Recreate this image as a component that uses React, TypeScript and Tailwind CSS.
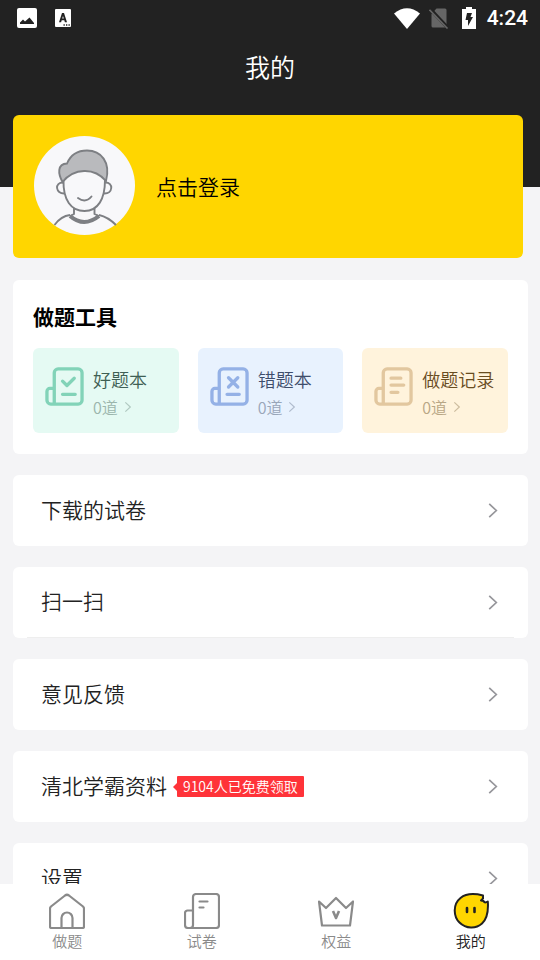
import React from "react";

function ChevronRight({ className }: { className: string }) {
  return (
    <svg viewBox="0 0 10 18" fill="none" stroke="currentColor" strokeWidth="1.8" className={className} aria-hidden="true">
      <path d="M1 2 8.500 9 1 16" />
    </svg>
  );
}

function PaperIcon({ children, className }: { children: React.ReactNode; className: string }) {
  return (
    <svg
      viewBox="0 0 40 40"
      fill="none"
      stroke="currentColor"
      strokeWidth="3.4"
      strokeLinecap="round"
      strokeLinejoin="round"
      className={className}
      aria-hidden="true"
    >
      <path d="M9.500 38V6a4 4 0 0 1 4-4H34a4 4 0 0 1 4 4v28a4 4 0 0 1-4 4H6a4 4 0 0 1-4-4V25a3 3 0 0 1 3-3h4" />
      {children}
    </svg>
  );
}

function StatusBar() {
  return (
    <div className="flex h-9 items-center justify-between pl-[17px] pr-3">
      <div className="flex items-center gap-[18px]">
        <svg viewBox="0 0 20 20" className="size-5" aria-hidden="true">
          <rect width="20" height="20" rx="2" fill="#fff" />
          <path d="M3 16v-1.500L6 11.500 8 13.500 12.500 9.500 17 15v1z" fill="#222" />
        </svg>
        <svg viewBox="0 0 16 18" className="h-[18px] w-4" aria-hidden="true">
          <rect width="16" height="18" rx="1" fill="#fff" />
          <path
            d="M4 13.200 7 4h2l3 9.200H9.900L9.300 11.300H6.700L6.100 13.200zM7.200 9.600h1.600L8 7z"
            fill="#222"
            fillRule="evenodd"
          />
          <path d="M8.500 16h1.300M11 16h1.300M13.500 16h1.300" stroke="#222" strokeWidth="1.400" />
        </svg>
      </div>
      <div className="flex items-center">
        <svg viewBox="0 0 26 21" className="h-[21px] w-[26px]" aria-hidden="true">
          <path d="M0 5.500Q13-5 26 5.500L13 21z" fill="#fff" />
        </svg>
        <svg viewBox="0 0 20 21" className="ml-[9px] h-[21px] w-5" aria-hidden="true">
          <path d="M7.500.5h8.500a1.500 1.500 0 0 1 1.500 1.500v16a1.500 1.500 0 0 1-1.500 1.500h-12A1.500 1.500 0 0 1 2.500 18V6z" fill="#666" />
          <path d="M1.200 1 19 20" stroke="#222" strokeWidth="3.500" />
          <path d="M.5 1.800 18.500 20.500" stroke="#666" strokeWidth="1.600" />
        </svg>
        <svg viewBox="0 0 14 22" className="ml-[13px] h-[22px] w-[14px]" aria-hidden="true">
          <path d="M4 0h6v2h4v20H0V2h4z" fill="#fff" />
          <path d="M5 6h5L8.500 10H11L6 19V13H3.500z" fill="#222" />
        </svg>
        <span className="ml-[11px] font-[Roboto] text-[21px] font-medium leading-6">4:24</span>
      </div>
    </div>
  );
}

function Avatar() {
  return (
    <svg viewBox="0 0 101 99" className="h-[99px] w-[101px]" fill="none" stroke="#7d7f83" strokeWidth="1.900" aria-hidden="true">
      <ellipse cx="50.500" cy="49.500" rx="50.500" ry="49.500" fill="#f8f8fa" stroke="none" />
      <path d="M28.500 46C24 38 23 28 33 27.500C37 18 45 14.500 53 14.500C67 14.500 77 26 72 45C60 31 40 32 28.500 46Z" fill="#b9babd" />
      <path d="M29.500 44C29 64 37 75 50.500 75C64 75 71 63 71 44" />
      <path d="M29.500 46.500C20 46 21.500 58 30.500 57.500M71 46.500C80 46 79 58 70 57.500" />
      <path d="M44 62Q51.500 67.500 57.500 60.500" strokeLinecap="round" />
      <path d="M40 72V78L36 80M60.500 72V78L65 80" />
      <path d="M36 80Q50 92 65 80" strokeWidth="4" />
      <path d="M20.500 89Q27 80 36 79M65 79Q74 81 82 89" />
    </svg>
  );
}

const tools = [
  {
    name: "好题本",
    count: "0道",
    card: "bg-[#e5faf3]",
    icon: "size-[39px] shrink-0 text-[#82d3b8]",
    title: "text-[#3f5f54]",
    sub: "text-[#9bb5ac]",
    mark: <path d="M18 14.500 22.500 19 30 11.500M18 28h13" />,
  },
  {
    name: "错题本",
    count: "0道",
    card: "bg-[#e8f2fe]",
    icon: "size-[39px] shrink-0 text-[#94b1e6]",
    title: "text-[#3e4d6b]",
    sub: "text-[#99a6b9]",
    mark: <path d="M19 11 28.500 20.500M28.500 11 19 20.500M17.500 28H30" />,
  },
  {
    name: "做题记录",
    count: "0道",
    card: "bg-[#fff3dc]",
    icon: "size-[39px] shrink-0 text-[#e2c79f]",
    title: "text-[#694c1f]",
    sub: "text-[#b8a685]",
    mark: <path d="M17.500 11.500h10M17.500 18.500h13M17.500 26h7" />,
  },
];

const rows = [
  { label: "下载的试卷" },
  { label: "扫一扫", divider: true },
  { label: "意见反馈" },
  { label: "清北学霸资料", badge: "9104人已免费领取" },
  { label: "设置" },
];

const tabs = [
  {
    label: "做题",
    icon: (
      <svg viewBox="0 0 36 36" fill="none" stroke="currentColor" strokeWidth="2.200" strokeLinejoin="round" className="size-9" aria-hidden="true">
        <path d="M1 33.500V15.500Q1 14.500 2 13.500L16 2.500Q18 1 20 2.500L34 13.500Q35 14.500 35 15.500V33.500Q35 35 33.500 35H2.500Q1 35 1 33.500Z" />
        <path d="M12.500 35V25a5.500 5.500 0 0 1 11 0V35" />
      </svg>
    ),
  },
  {
    label: "试卷",
    icon: (
      <svg viewBox="0 0 36 36" fill="none" stroke="currentColor" strokeWidth="2.200" strokeLinecap="round" strokeLinejoin="round" className="size-9" aria-hidden="true">
        <path d="M9 32V4a3 3 0 0 1 3-3h20a3 3 0 0 1 3 3v28a3 3 0 0 1-3 3H4a3 3 0 0 1-3-3V20a2.500 2.500 0 0 1 2.500-2.500H9M9 32a3 3 0 0 1-3 3" />
        <path d="M15.500 8.500h8M15.500 14.500h4" />
      </svg>
    ),
  },
  {
    label: "权益",
    icon: (
      <svg viewBox="0 0 36 36" fill="none" stroke="currentColor" strokeWidth="2.200" strokeLinejoin="round" className="size-9" aria-hidden="true">
        <path d="M1 8.500 8 15 18 5 28 15 35 8.500 32 32.500H4z" />
        <path d="M15 18 18 25 21 18" strokeWidth="2.600" />
      </svg>
    ),
  },
  {
    label: "我的",
    active: true,
    icon: (
      <svg viewBox="0 0 36 36" fill="none" stroke="#222" strokeWidth="2" strokeLinejoin="round" strokeLinecap="round" className="size-9" aria-hidden="true">
        <path d="M30 2.500C22 .5 13 .5 7.500 5C0 11 0 23 6.500 29.500C13 36 23 36 29 30.500C34 26 35.500 18 34.800 8.500C33 9.500 31.500 10 30.500 8L28 7.500 30 5.500Z" fill="#ffd600" />
        <path d="M14 15v4M21.500 15v4" strokeWidth="2.600" />
      </svg>
    ),
  },
];

function App() {
  return (
    <div className="flex h-screen flex-col bg-[#f4f4f6] font-['Noto_Sans_CJK_SC',sans-serif] text-[#222]">
      <main className="min-h-0 flex-1 overflow-y-auto [scrollbar-width:none]">
        {/* Header */}
        <header className="h-[187px] bg-[#222] text-white">
          <StatusBar />
          <h1 className="pt-3 text-center text-[25px] font-[350] leading-9">我的</h1>
        </header>

        <div className="-mt-[72px] pb-5 pl-[13px] pr-3">
          {/* Login card */}
          <button className="flex h-[143px] w-[99%] items-center gap-[21px] rounded-md bg-[#ffd600] pb-0.5 pl-[21px] text-left text-[21px] font-[350] leading-8 text-black">
            <Avatar />
            点击登录
          </button>

          {/* Tools */}
          <section className="mt-[22px] rounded-md bg-white px-5 pb-[21px] pt-5">
            <h2 className="text-[21px] font-bold leading-8 text-black">做题工具</h2>
            <div className="mt-4 grid grid-cols-3 gap-[19px]">
              {tools.map((tool) => (
                <button key={tool.name} className={`flex h-[85px] gap-[9px] rounded-md pl-3 pt-[19px] text-left ${tool.card}`}>
                  <PaperIcon className={tool.icon}>{tool.mark}</PaperIcon>
                  <span className="whitespace-nowrap font-[350]">
                    <span className={`block text-lg leading-6 ${tool.title}`}>{tool.name}</span>
                    <span className={`mt-1 flex items-center gap-1.5 text-base leading-6 ${tool.sub}`}>
                      {tool.count}
                      <ChevronRight className="h-3 w-2 opacity-70" />
                    </span>
                  </span>
                </button>
              ))}
            </div>
          </section>

          {/* Menu */}
          <ul className="mt-[21px] space-y-[21px]">
            {rows.map((row) => (
              <li key={row.label} className="rounded-md bg-white px-3.5">
                <a
                  href="#"
                  className={`flex h-[71px] items-center pl-3.5 pr-4 ${row.divider ? "border-b border-[#eee]" : ""}`}
                >
                  <span className="pb-1 text-[21px] font-[350] leading-7">{row.label}</span>
                  {row.badge && (
                    <span className="ml-1.5 flex items-center">
                      <svg viewBox="0 0 4 8" className="h-2 w-1" aria-hidden="true">
                        <path d="M4 0v8L0 4z" fill="#ff3339" />
                      </svg>
                      <span className="rounded-[1px] bg-[#ff3339] px-1.5 text-sm font-[350] leading-[21px] text-white">{row.badge}</span>
                    </span>
                  )}
                  <ChevronRight className="ml-auto h-[17px] w-[10px] text-[#96969b]" />
                </a>
              </li>
            ))}
          </ul>
        </div>
      </main>

      {/* Bottom tabs */}
      <nav className="grid h-[76px] shrink-0 grid-cols-4 bg-white pr-0.5">
        {tabs.map((tab) => (
          <a
            key={tab.label}
            href="#"
            className={`flex flex-col items-center pt-[9px] text-[15px] font-[350] leading-6 ${tab.active ? "text-[#222]" : "text-[#8a8a8a]"}`}
          >
            {tab.icon}
            {tab.label}
          </a>
        ))}
      </nav>
    </div>
  );
}

export default App;
